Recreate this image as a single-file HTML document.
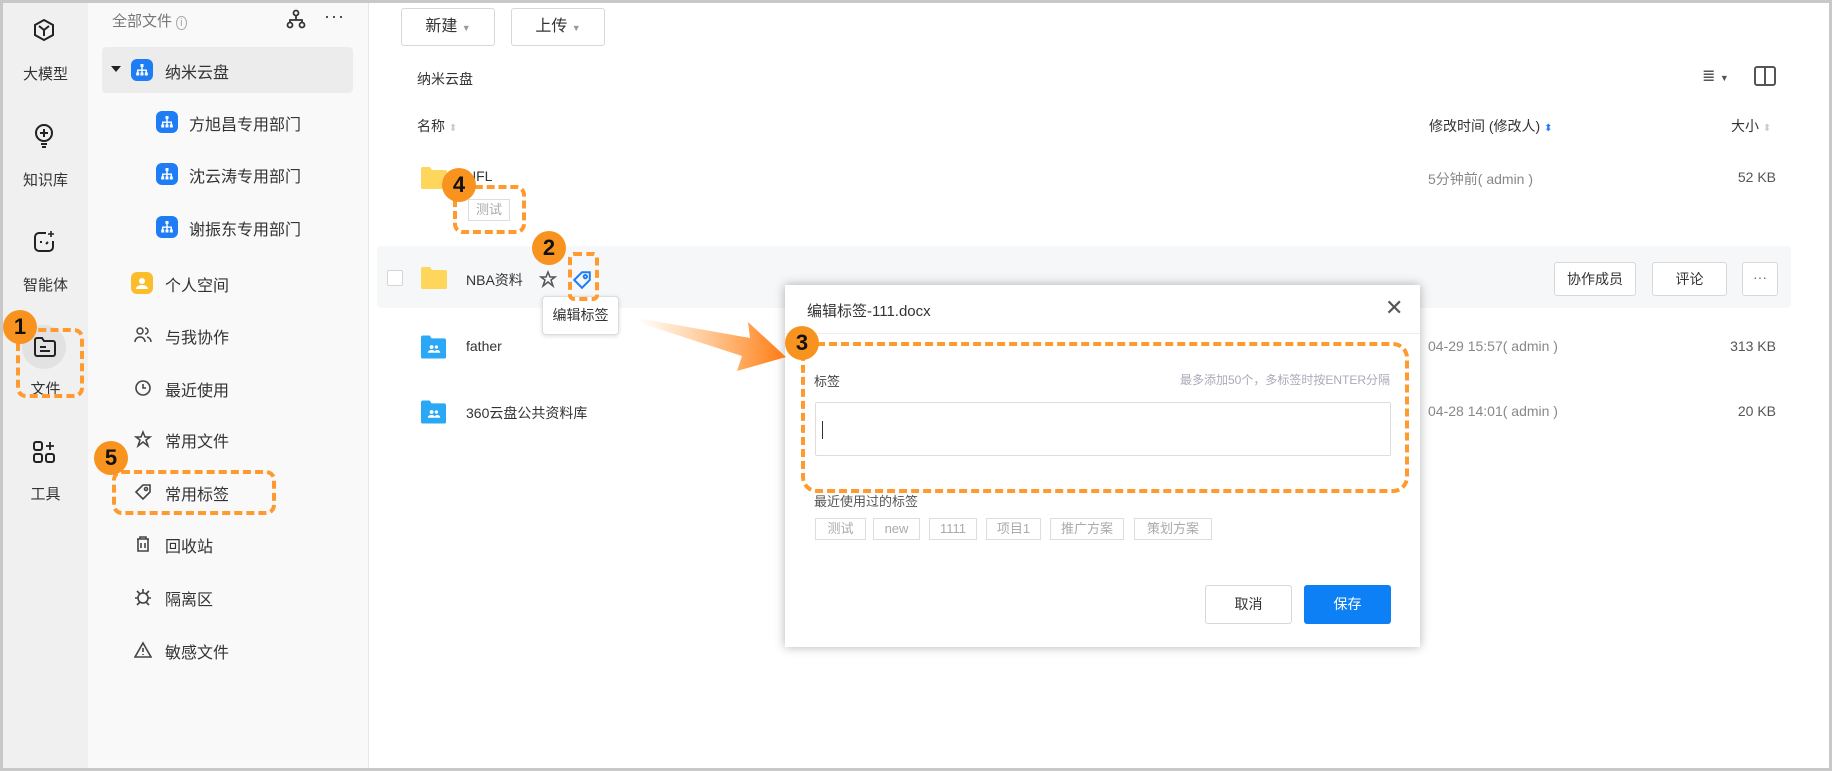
<!DOCTYPE html>
<html><head><meta charset="utf-8"><style>
*{margin:0;padding:0;box-sizing:border-box}
body{width:1832px;height:771px;position:relative;overflow:hidden;background:#fff;font-family:"Liberation Sans","Noto Sans CJK SC",sans-serif;color:#333}
.a{position:absolute;white-space:nowrap}
.rail{left:3px;top:3px;width:85px;height:765px;background:#f0f0f0}
.side{left:88px;top:3px;width:281px;height:765px;background:#f9f9f9;border-right:1px solid #e6e6e6}
.rl{font-size:15px;color:#333;width:85px;text-align:center;left:3px}
.si{font-size:16px;color:#333}
.blue{width:22px;height:22px;border-radius:6px;background:#1e7cf5}
.btn{border:1px solid #d8d8d8;border-radius:3px;background:#fff;font-size:16px;color:#333;text-align:center}
.hd{font-size:14px;color:#333}
.gr{font-size:14px;color:#888}
.num{width:34px;height:34px;border-radius:50%;background:#f7931e;color:#111;font-weight:bold;font-size:22px;text-align:center;line-height:34px}
.dash{border:4px dashed #ff9a2e;border-radius:10px}
.tag{border:1px solid #ddd;font-size:13px;color:#aaa;text-align:center;line-height:20px;height:22px}
</style></head><body>
<svg width="0" height="0" style="position:absolute"><defs>
<symbol id="org" viewBox="0 0 22 22"><rect width="22" height="22" rx="6" fill="#1e7cf5"/><g fill="#fff"><rect x="9.5" y="5" width="3" height="3"/><rect x="10.3" y="8" width="1.4" height="3"/><rect x="6" y="10.5" width="10" height="1.4"/><rect x="6" y="10.5" width="1.4" height="3"/><rect x="10.3" y="10.5" width="1.4" height="3"/><rect x="14.6" y="10.5" width="1.4" height="3"/><rect x="5.2" y="13.5" width="3" height="3"/><rect x="9.5" y="13.5" width="3" height="3"/><rect x="13.8" y="13.5" width="3" height="3"/></g></symbol>
<symbol id="yf" viewBox="0 0 26 22"><path d="M0 2a2 2 0 0 1 2-2h7l2 3h13a2 2 0 0 1 2 2v15a2 2 0 0 1-2 2H2a2 2 0 0 1-2-2z" fill="#ffd65c"/><rect y="4" width="26" height="18" rx="2" fill="#ffd65c"/></symbol>
<symbol id="bf" viewBox="0 0 26 24"><path d="M0 2a2 2 0 0 1 2-2h7l2 3h13a2 2 0 0 1 2 2v17a2 2 0 0 1-2 2H2a2 2 0 0 1-2-2z" fill="#2aa7f5"/><rect y="4" width="26" height="20" rx="2" fill="#2aa7f5"/><circle cx="11" cy="12" r="2" fill="#fff"/><circle cx="16" cy="12" r="1.7" fill="#fff"/><path d="M7 18a4 3 0 0 1 8 0zM14 18a3 3 0 0 1 6 0z" fill="#fff"/></symbol>
</defs></svg>
<div class="a" style="left:0;top:0;width:1832px;height:771px;border:3px solid #c8c8c8;z-index:50;pointer-events:none"></div>
<div class="a rail"></div>
<div class="a side"></div>

<svg class="a" style="left:32px;top:18px" width="24" height="24" viewBox="0 0 24 24" fill="none" stroke="#222" stroke-width="2"><path d="M12 2l9 5v10l-9 5-9-5V7z"/><path d="M7 8l5 4 5-4M12 12v6"/></svg>
<div class="a rl" style="top:63px">大模型</div>
<svg class="a" style="left:32px;top:123px" width="24" height="26" viewBox="0 0 24 26" fill="none" stroke="#222" stroke-width="2"><circle cx="12" cy="10" r="8"/><path d="M12 6v8M8 10h8M9 21h6M10 24h4"/></svg>
<div class="a rl" style="top:169px">知识库</div>
<svg class="a" style="left:32px;top:230px" width="24" height="24" viewBox="0 0 24 24" fill="none" stroke="#222" stroke-width="2"><path d="M14 3H7a4 4 0 0 0-4 4v10a4 4 0 0 0 4 4h10a4 4 0 0 0 4-4v-6"/><path d="M9 11v2M14 14l2-2"/><path d="M19 1v6M16 4h6" stroke-width="1.6"/></svg>
<div class="a rl" style="top:274px">智能体</div>
<div class="a" style="left:22px;top:325px;width:44px;height:44px;border-radius:50%;background:#e2e2e2"></div>
<svg class="a" style="left:33px;top:336px" width="24" height="22" viewBox="0 0 24 22" fill="none" stroke="#222" stroke-width="2"><path d="M2 4a2 2 0 0 1 2-2h5l2 3h9a2 2 0 0 1 2 2v11a2 2 0 0 1-2 2H4a2 2 0 0 1-2-2z"/><path d="M7 11h6M7 15h10"/></svg>
<div class="a rl" style="top:378px">文件</div>
<svg class="a" style="left:32px;top:440px" width="24" height="24" viewBox="0 0 24 24" fill="none" stroke="#222" stroke-width="2"><rect x="2" y="2" width="8" height="8" rx="2"/><rect x="2" y="14" width="8" height="8" rx="2"/><rect x="14" y="14" width="8" height="8" rx="2"/><path d="M18 2v8M14 6h8" stroke-width="1.8"/></svg>
<div class="a rl" style="top:483px">工具</div>

<div class="a" style="left:112px;top:10px;font-size:15px;color:#777">全部文件 <span style="font-size:11px;border:1px solid #aaa;border-radius:50%;padding:0 3px;color:#aaa">i</span></div>
<svg class="a" style="left:286px;top:9px" width="20" height="20" viewBox="0 0 20 20" fill="none" stroke="#333" stroke-width="1.8"><circle cx="10" cy="4" r="2.5"/><circle cx="4" cy="16" r="2.5"/><circle cx="16" cy="16" r="2.5"/><path d="M10 7v4M4 13v-2h12v2"/></svg>
<div class="a" style="left:324px;top:6px;font-size:18px;color:#333;letter-spacing:1px">···</div>
<div class="a" style="left:102px;top:47px;width:251px;height:46px;background:#ececec;border-radius:4px"></div>
<div class="a" style="left:111px;top:66px;width:0;height:0;border-left:5px solid transparent;border-right:5px solid transparent;border-top:6px solid #222"></div>
<svg class="a" style="left:131px;top:59px" width="22" height="22"><use href="#org"/></svg>
<div class="a si" style="left:165px;top:59px">纳米云盘</div>
<svg class="a" style="left:156px;top:111px" width="22" height="22"><use href="#org"/></svg><div class="a si" style="left:189px;top:111px">方旭昌专用部门</div>
<svg class="a" style="left:156px;top:163px" width="22" height="22"><use href="#org"/></svg><div class="a si" style="left:189px;top:163px">沈云涛专用部门</div>
<svg class="a" style="left:156px;top:216px" width="22" height="22"><use href="#org"/></svg><div class="a si" style="left:189px;top:216px">谢振东专用部门</div>
<svg class="a" style="left:131px;top:272px" width="22" height="22" viewBox="0 0 22 22"><rect width="22" height="22" rx="6" fill="#fbbd2b"/><circle cx="11" cy="9" r="3" fill="#fff"/><path d="M5 17a6 4 0 0 1 12 0z" fill="#fff"/></svg>
<div class="a si" style="left:165px;top:272px">个人空间</div>
<svg class="a" style="left:134px;top:326px" width="18" height="18" viewBox="0 0 18 18" fill="none" stroke="#444" stroke-width="1.5"><circle cx="6" cy="5" r="3"/><path d="M1 16a5 5 0 0 1 10 0M11 2a3 3 0 0 1 0 6M13 11a5 5 0 0 1 4 5"/></svg>
<div class="a si" style="left:165px;top:324px">与我协作</div>
<svg class="a" style="left:134px;top:379px" width="18" height="18" viewBox="0 0 18 18" fill="none" stroke="#444" stroke-width="1.6"><circle cx="9" cy="9" r="7"/><path d="M9 5v4h3"/></svg>
<div class="a si" style="left:165px;top:377px">最近使用</div>
<svg class="a" style="left:134px;top:430px" width="18" height="18" viewBox="0 0 18 18" fill="none" stroke="#444" stroke-width="1.5"><path d="M9 2l2 5h5l-4 3 2 6-5-4-5 4 2-6-4-3h5z"/></svg>
<div class="a si" style="left:165px;top:428px">常用文件</div>
<svg class="a" style="left:134px;top:483px" width="18" height="18" viewBox="0 0 18 18" fill="none" stroke="#444" stroke-width="1.6"><path d="M2 9l7-7h7v7l-7 7z"/><circle cx="12" cy="6" r="1.5"/></svg>
<div class="a si" style="left:165px;top:481px">常用标签</div>
<svg class="a" style="left:134px;top:535px" width="18" height="18" viewBox="0 0 18 18" fill="none" stroke="#444" stroke-width="1.6"><path d="M3 4h12M6 4V2h6v2M4 4v12h10V4M7 8v5M11 8v5"/></svg>
<div class="a si" style="left:165px;top:533px">回收站</div>
<svg class="a" style="left:134px;top:588px" width="18" height="18" viewBox="0 0 18 18" fill="none" stroke="#444" stroke-width="1.6"><circle cx="9" cy="10" r="5"/><path d="M9 1v4M1 10h3M14 10h3M3 3l3 3M15 3l-3 3M3 17l3-3M15 17l-3-3"/></svg>
<div class="a si" style="left:165px;top:586px">隔离区</div>
<svg class="a" style="left:134px;top:641px" width="18" height="18" viewBox="0 0 18 18" fill="none" stroke="#444" stroke-width="1.6"><path d="M9 2l8 14H1z"/><path d="M9 7v4M9 13v1"/></svg>
<div class="a si" style="left:165px;top:639px">敏感文件</div>

<div class="a btn" style="left:401px;top:8px;width:94px;height:38px;line-height:36px">新建 <span style="font-size:9px;color:#999">▼</span></div>
<div class="a btn" style="left:511px;top:8px;width:94px;height:38px;line-height:36px">上传 <span style="font-size:9px;color:#999">▼</span></div>
<div class="a hd" style="left:417px;top:69px">纳米云盘</div>
<div class="a hd" style="left:417px;top:116px">名称 <span style="color:#ccc;font-size:10px">⬍</span></div>
<div class="a hd" style="left:1429px;top:116px">修改时间 (修改人) <span style="color:#1e7cf5;font-size:10px">⬍</span></div>
<div class="a hd" style="left:1731px;top:116px">大小 <span style="color:#ccc;font-size:10px">⬍</span></div>
<div class="a" style="left:1702px;top:66px;font-size:16px;color:#555">≣ <span style="font-size:9px">▼</span></div>
<div class="a" style="left:1754px;top:66px;width:22px;height:20px;border:2px solid #555;border-radius:3px"></div>
<div class="a" style="left:1764px;top:67px;width:2px;height:18px;background:#555"></div>

<svg class="a" style="left:421px;top:167px" width="26" height="22"><use href="#yf"/></svg>
<div class="a" style="left:466px;top:168px;font-size:14px;color:#333">NFL</div>
<div class="a tag" style="left:468px;top:199px;width:42px">测试</div>
<div class="a gr" style="left:1428px;top:169px">5分钟前( admin )</div>
<div class="a gr" style="left:1700px;top:169px;width:76px;text-align:right;color:#555">52 KB</div>

<div class="a" style="left:377px;top:246px;width:1414px;height:62px;background:#f6f7f9;border-radius:4px"></div>
<div class="a" style="left:387px;top:270px;width:16px;height:16px;border:1px solid #d5d5d5;background:#fff;border-radius:2px"></div>
<svg class="a" style="left:421px;top:267px" width="26" height="22"><use href="#yf"/></svg>
<div class="a" style="left:466px;top:270px;font-size:14px;color:#333">NBA资料</div>
<svg class="a" style="left:539px;top:270px" width="18" height="18" viewBox="0 0 18 18" fill="none" stroke="#555" stroke-width="1.5"><path d="M9 2l2 5h5l-4 3 2 6-5-4-5 4 2-6-4-3h5z"/></svg>
<svg class="a" style="left:572px;top:270px" width="20" height="20" viewBox="0 0 18 18" fill="none" stroke="#1e7cf5" stroke-width="1.8"><path d="M2 9l7-7h7v7l-7 7z"/><circle cx="12" cy="6" r="1.5"/></svg>
<div class="a btn" style="left:1554px;top:262px;width:82px;height:34px;line-height:32px;font-size:14px">协作成员</div>
<div class="a btn" style="left:1652px;top:262px;width:75px;height:34px;line-height:32px;font-size:14px">评论</div>
<div class="a btn" style="left:1742px;top:262px;width:36px;height:34px;line-height:28px;font-size:14px;color:#666">···</div>
<div class="a" style="left:542px;top:296px;width:77px;height:39px;background:#fff;border:1px solid #ddd;border-radius:4px;box-shadow:0 1px 4px rgba(0,0,0,.15);font-size:14px;text-align:center;line-height:37px">编辑标签</div>

<svg class="a" style="left:421px;top:335px" width="25" height="24"><use href="#bf"/></svg>
<div class="a" style="left:466px;top:338px;font-size:14px;color:#333">father</div>
<div class="a gr" style="left:1428px;top:338px">04-29 15:57( admin )</div>
<div class="a gr" style="left:1700px;top:338px;width:76px;text-align:right;color:#555">313 KB</div>
<svg class="a" style="left:421px;top:400px" width="25" height="24"><use href="#bf"/></svg>
<div class="a" style="left:466px;top:403px;font-size:14px;color:#333">360云盘公共资料库</div>
<div class="a gr" style="left:1428px;top:403px">04-28 14:01( admin )</div>
<div class="a gr" style="left:1700px;top:403px;width:76px;text-align:right;color:#555">20 KB</div>

<div class="a" style="left:785px;top:285px;width:635px;height:362px;background:#fff;box-shadow:0 0 10px rgba(0,0,0,.3)"></div>
<div class="a" style="left:807px;top:300px;font-size:15px;color:#333">编辑标签-111.docx</div>
<div class="a" style="left:1385px;top:295px;font-size:22px;color:#555">✕</div>
<div class="a" style="left:785px;top:333px;width:635px;height:1px;background:#eee"></div>
<div class="a" style="left:814px;top:371px;font-size:13px;color:#444">标签</div>
<div class="a" style="left:1150px;top:371px;width:240px;text-align:right;font-size:12px;color:#aab">最多添加50个，多标签时按ENTER分隔</div>
<div class="a" style="left:815px;top:402px;width:576px;height:54px;border:1px solid #ddd;border-radius:2px"></div>
<div class="a" style="left:822px;top:421px;width:1px;height:18px;background:#333"></div>
<div class="a" style="left:814px;top:491px;font-size:13px;color:#555">最近使用过的标签</div>
<div class="a tag" style="left:815px;top:518px;width:51px">测试</div>
<div class="a tag" style="left:873px;top:518px;width:47px">new</div>
<div class="a tag" style="left:929px;top:518px;width:48px">1111</div>
<div class="a tag" style="left:986px;top:518px;width:55px">项目1</div>
<div class="a tag" style="left:1050px;top:518px;width:74px">推广方案</div>
<div class="a tag" style="left:1134px;top:518px;width:78px">策划方案</div>
<div class="a btn" style="left:1205px;top:585px;width:87px;height:39px;line-height:37px;font-size:14px">取消</div>
<div class="a" style="left:1304px;top:585px;width:87px;height:39px;line-height:39px;font-size:14px;background:#0e80f5;color:#fff;text-align:center;border-radius:3px">保存</div>

<svg class="a" style="left:620px;top:300px;z-index:20" width="180" height="90" viewBox="620 300 180 90"><defs><linearGradient id="g" x1="0" x2="1"><stop offset="0" stop-color="#ff9a2e" stop-opacity="0"/><stop offset="1" stop-color="#ff7a10"/></linearGradient></defs><path d="M637 318L750 338L748 322L786 357L737 371L742 356L637 322Z" fill="url(#g)"/></svg>

<div class="a dash" style="left:16px;top:328px;width:68px;height:70px;z-index:30"></div>
<div class="a num" style="left:3px;top:310px;z-index:31">1</div>
<div class="a dash" style="left:453px;top:185px;width:73px;height:49px;z-index:30"></div>
<div class="a num" style="left:442px;top:168px;z-index:31">4</div>
<div class="a dash" style="left:568px;top:252px;width:31px;height:49px;border-radius:6px;z-index:30"></div>
<div class="a num" style="left:532px;top:231px;z-index:31">2</div>
<div class="a dash" style="left:801px;top:342px;width:608px;height:151px;border-radius:16px;z-index:30"></div>
<div class="a num" style="left:785px;top:326px;z-index:31">3</div>
<div class="a dash" style="left:112px;top:470px;width:164px;height:45px;z-index:30"></div>
<div class="a num" style="left:94px;top:441px;z-index:31">5</div>
</body></html>
